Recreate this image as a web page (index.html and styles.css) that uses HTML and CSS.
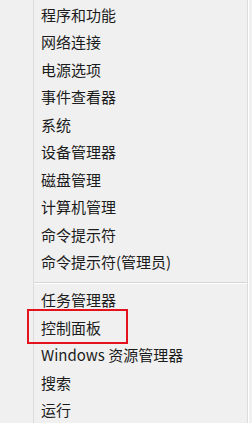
FILE: index.html
```html
<!DOCTYPE html>
<html lang="zh-CN">
<head>
  <meta charset="UTF-8">
  <meta name="viewport" content="width=device-width, initial-scale=1.0">
  <title>快速链接菜单</title>
  <link rel="stylesheet" href="styles.css">
</head>
<body>
  <div class="menu">
    <ul class="menu-group">
      <li class="menu-item">程序和功能</li>
      <li class="menu-item">网络连接</li>
      <li class="menu-item">电源选项</li>
      <li class="menu-item">事件查看器</li>
      <li class="menu-item">系统</li>
      <li class="menu-item">设备管理器</li>
      <li class="menu-item">磁盘管理</li>
      <li class="menu-item">计算机管理</li>
      <li class="menu-item">命令提示符</li>
      <li class="menu-item">命令提示符(管理员)</li>
    </ul>
    <div class="separator"></div>
    <ul class="menu-group">
      <li class="menu-item">任务管理器</li>
      <li class="menu-item marked">控制面板<span class="mark-box"></span></li>
      <li class="menu-item">Windows 资源管理器</li>
      <li class="menu-item">搜索</li>
      <li class="menu-item">运行</li>
    </ul>
  </div>
</body>
</html>
```
FILE: styles.css
```css
body {
  margin: 0;
  background-color: #f0f0f0;
  font-family: "Noto Sans CJK SC", "Noto Sans", sans-serif;
  color: #1c1c1c;
  overflow: hidden;
  height: 423px;
}

.menu {
  margin: 0 4px 0 33px;
  padding-top: 0.5px;
  border-left: 1px solid #dcdcdc;
  border-right: 1px solid #dcdcdc;
  box-shadow: 1px 0 0 #ffffff;
  height: 100%;
  box-sizing: border-box;
}

.menu-group {
  list-style: none;
  margin: 0;
  padding: 0;
}

.menu-item {
  height: 27.5px;
  line-height: 27.5px;
  padding-left: 7px;
  font-size: 15px;
  white-space: nowrap;
}

.separator {
  margin: 6px 0 2.5px;
  border-top: 1px solid #d6d6d6;
  border-bottom: 1px solid #ffffff;
}

.marked {
  position: relative;
}

/* red annotation box over the item */
.mark-box {
  position: absolute;
  left: -7px;
  top: -5px;
  width: 101px;
  height: 35px;
  border: 2px solid #e3121c;
  box-sizing: border-box;
}
```
